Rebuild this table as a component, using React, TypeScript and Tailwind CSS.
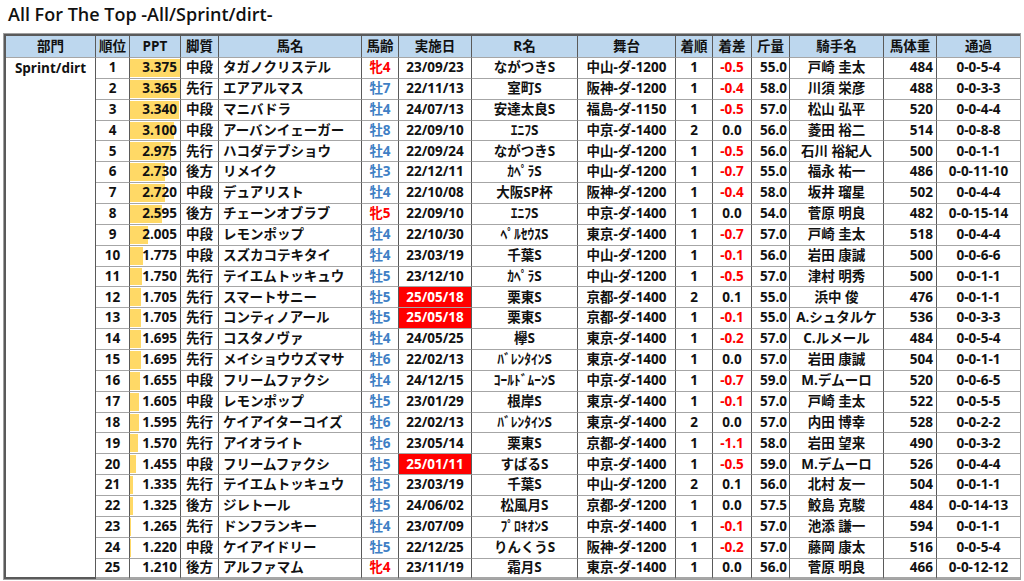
import React from "react";

type Row = [
  number, // 順位
  number, // PPT
  string, // 脚質
  string, // 馬名
  string, // 馬齢
  string, // 実施日
  boolean, // 直近
  string, // R名
  string, // 舞台
  number, // 着順
  string, // 着差
  string, // 斤量
  string, // 騎手名
  number, // 馬体重
  string, // 通過
];

const rows: Row[] = [
  [1, 3.375, "中段", "タガノクリステル", "牝4", "23/09/23", false, "ながつきS", "中山-ダ-1200", 1, "-0.5", "55.0", "戸崎 圭太", 484, "0-0-5-4"],
  [2, 3.365, "先行", "エアアルマス", "牡7", "22/11/13", false, "室町S", "阪神-ダ-1200", 1, "-0.4", "58.0", "川須 栄彦", 488, "0-0-3-3"],
  [3, 3.34, "中段", "マニバドラ", "牡4", "24/07/13", false, "安達太良S", "福島-ダ-1150", 1, "-0.5", "57.0", "松山 弘平", 520, "0-0-4-4"],
  [4, 3.1, "中段", "アーバンイェーガー", "牡8", "22/09/10", false, "ｴﾆﾌS", "中京-ダ-1400", 2, "0.0", "56.0", "菱田 裕二", 514, "0-0-8-8"],
  [5, 2.975, "先行", "ハコダテブショウ", "牡4", "22/09/24", false, "ながつきS", "中山-ダ-1200", 1, "-0.5", "56.0", "石川 裕紀人", 500, "0-0-1-1"],
  [6, 2.73, "後方", "リメイク", "牡3", "22/12/11", false, "ｶﾍﾟﾗS", "中山-ダ-1200", 1, "-0.7", "55.0", "福永 祐一", 486, "0-0-11-10"],
  [7, 2.72, "中段", "デュアリスト", "牡4", "22/10/08", false, "大阪SP杯", "阪神-ダ-1200", 1, "-0.4", "58.0", "坂井 瑠星", 502, "0-0-4-4"],
  [8, 2.595, "後方", "チェーンオブラブ", "牝5", "22/09/10", false, "ｴﾆﾌS", "中京-ダ-1400", 1, "0.0", "54.0", "菅原 明良", 482, "0-0-15-14"],
  [9, 2.005, "中段", "レモンポップ", "牡4", "22/10/30", false, "ﾍﾟﾙｾｳｽS", "東京-ダ-1400", 1, "-0.7", "57.0", "戸崎 圭太", 518, "0-0-4-4"],
  [10, 1.775, "中段", "スズカコテキタイ", "牡4", "23/03/19", false, "千葉S", "中山-ダ-1200", 1, "-0.1", "56.0", "岩田 康誠", 500, "0-0-6-6"],
  [11, 1.75, "先行", "テイエムトッキュウ", "牡5", "23/12/10", false, "ｶﾍﾟﾗS", "中山-ダ-1200", 1, "-0.5", "57.0", "津村 明秀", 500, "0-0-1-1"],
  [12, 1.705, "先行", "スマートサニー", "牡5", "25/05/18", true, "栗東S", "京都-ダ-1400", 2, "0.1", "55.0", "浜中 俊", 476, "0-0-1-1"],
  [13, 1.705, "先行", "コンティノアール", "牡5", "25/05/18", true, "栗東S", "京都-ダ-1400", 1, "-0.1", "55.0", "A.シュタルケ", 536, "0-0-3-3"],
  [14, 1.695, "先行", "コスタノヴァ", "牡4", "24/05/25", false, "欅S", "東京-ダ-1400", 1, "-0.2", "57.0", "C.ルメール", 484, "0-0-5-4"],
  [15, 1.695, "先行", "メイショウウズマサ", "牡6", "22/02/13", false, "ﾊﾞﾚﾝﾀｲﾝS", "東京-ダ-1400", 1, "0.0", "57.0", "岩田 康誠", 504, "0-0-1-1"],
  [16, 1.655, "中段", "フリームファクシ", "牡4", "24/12/15", false, "ｺｰﾙﾄﾞﾑｰﾝS", "中京-ダ-1400", 1, "-0.7", "59.0", "M.デムーロ", 520, "0-0-6-5"],
  [17, 1.605, "中段", "レモンポップ", "牡5", "23/01/29", false, "根岸S", "東京-ダ-1400", 1, "-0.1", "57.0", "戸崎 圭太", 522, "0-0-5-5"],
  [18, 1.595, "先行", "ケイアイターコイズ", "牡6", "22/02/13", false, "ﾊﾞﾚﾝﾀｲﾝS", "東京-ダ-1400", 2, "0.0", "57.0", "内田 博幸", 528, "0-0-2-2"],
  [19, 1.57, "先行", "アイオライト", "牡6", "23/05/14", false, "栗東S", "京都-ダ-1400", 1, "-1.1", "58.0", "岩田 望来", 490, "0-0-3-2"],
  [20, 1.455, "中段", "フリームファクシ", "牡5", "25/01/11", true, "すばるS", "中京-ダ-1400", 1, "-0.5", "59.0", "M.デムーロ", 526, "0-0-4-4"],
  [21, 1.335, "先行", "テイエムトッキュウ", "牡5", "23/03/19", false, "千葉S", "中山-ダ-1200", 2, "0.1", "56.0", "北村 友一", 504, "0-0-1-1"],
  [22, 1.325, "後方", "ジレトール", "牡5", "24/06/02", false, "松風月S", "京都-ダ-1200", 1, "0.0", "57.5", "鮫島 克駿", 484, "0-0-14-13"],
  [23, 1.265, "先行", "ドンフランキー", "牡4", "23/07/09", false, "ﾌﾟﾛｷｵﾝS", "中京-ダ-1400", 1, "-0.1", "57.0", "池添 謙一", 594, "0-0-1-1"],
  [24, 1.22, "中段", "ケイアイドリー", "牡5", "22/12/25", false, "りんくうS", "阪神-ダ-1200", 1, "-0.2", "57.0", "藤岡 康太", 516, "0-0-5-4"],
  [25, 1.21, "後方", "アルファマム", "牝4", "23/11/19", false, "霜月S", "東京-ダ-1400", 1, "0.0", "56.0", "菅原 明良", 466, "0-0-12-12"],
];

const headers = ["部門", "順位", "PPT", "脚質", "馬名", "馬齢", "実施日", "R名", "舞台", "着順", "着差", "斤量", "騎手名", "馬体重", "通過"];
const widths = [92, 34, 51, 38, 143, 37, 73, 106, 98, 37, 39, 38, 94, 53, 83];

const maxPpt = Math.max(...rows.map((r) => r[1]));
const minPpt = Math.min(...rows.map((r) => r[1]));

const cell = "border-r border-b border-r-[#5a5a5a] border-b-[#a6a6a6] p-0 whitespace-nowrap overflow-hidden";

export default function App() {
  return (
    <div className="w-[1024px] h-[581px] bg-white overflow-hidden font-['Open_Sans','Noto_Sans_CJK_JP',sans-serif] text-[#111]">
      <div className="h-[33px] pl-[8px] pt-[1px] text-[18px] font-semibold leading-[27px]">
        All For The Top -All/Sprint/dirt-
      </div>
      <div className="ml-[3px] w-[1018px] border border-[#a0a0a0]">
        <table className="table-fixed border-separate border-spacing-0 w-[1016px] border-t-2 border-l-2 border-[#5a5a5a] text-[13.5px] font-bold leading-none">
          <colgroup>
            {widths.map((w, i) => (
              <col key={i} style={{ width: i === 0 ? w - 2 : w }} />
            ))}
          </colgroup>
          <thead>
            <tr className="h-[22px] bg-[#bdd7ee]">
              {headers.map((h, i) => (
                <th
                  key={h}
                  className={`${cell} border-b-[#5a5a5a] text-center font-bold ${i === headers.length - 1 ? "border-r-0" : ""}`}
                >
                  {h}
                </th>
              ))}
            </tr>
          </thead>
          <tbody>
            {rows.map((r, idx) => {
              const last = idx === rows.length - 1;
              const c = `${cell} ${last ? "border-b-[#5a5a5a] border-b-2" : ""}`;
              const pct = ((r[1] - minPpt) / (maxPpt - minPpt)) * 100;
              const diffRed = r[10].startsWith("-");
              return (
                <tr key={r[0]} className="h-[20.86px]">
                  {idx === 0 && (
                    <td
                      rowSpan={rows.length}
                      className="border-r border-b-2 border-[#5a5a5a] align-top text-center pt-[4px] p-0"
                    >
                      Sprint/dirt
                    </td>
                  )}
                  <td className={`${c} text-center`}>{r[0]}</td>
                  <td className={`${c} relative`}>
                    <div
                      className="absolute left-0 top-[1px] bottom-[1px] bg-[#ffd966]"
                      style={{ width: `${pct}%` }}
                    />
                    <div className="relative text-right pr-[3px]">{r[1].toFixed(3)}</div>
                  </td>
                  <td className={`${c} text-center`}>{r[2]}</td>
                  <td className={`${c} text-left pl-[4px]`}>{r[3]}</td>
                  <td
                    className={`${c} text-center ${r[4].startsWith("牝") ? "text-[#ff0000]" : "text-[#3f7fc5]"}`}
                  >
                    {r[4]}
                  </td>
                  <td className={`${c} text-center ${r[6] ? "bg-[#ff0000] text-white" : ""}`}>{r[5]}</td>
                  <td className={`${c} text-center`}>{r[7]}</td>
                  <td className={`${c} text-center`}>{r[8]}</td>
                  <td className={`${c} text-center`}>{r[9]}</td>
                  <td className={`${c} text-center ${diffRed ? "text-[#ff0000]" : ""}`}>{r[10]}</td>
                  <td className={`${c} text-right pr-[2px]`}>{r[11]}</td>
                  <td className={`${c} text-center`}>{r[12]}</td>
                  <td className={`${c} text-right pr-[3px]`}>{r[13]}</td>
                  <td className={`${c} text-center border-r-0`}>{r[14]}</td>
                </tr>
              );
            })}
          </tbody>
        </table>
      </div>
    </div>
  );
}
